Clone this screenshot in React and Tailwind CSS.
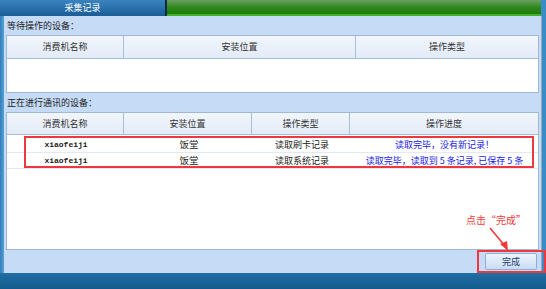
import React from "react";

const font = { fontFamily: '"Noto Sans CJK SC", "Noto Sans", sans-serif' };

function HeaderCell({ children, className = "" }) {
  return (
    <div
      className={`flex items-center justify-center border-r border-[#a9bfd9] text-[9px] text-[#333] ${className}`}
    >
      {children}
    </div>
  );
}

function Row({ cells }) {
  return (
    <div className="flex h-[16px] border-b border-[#e3e9f1]">
      <div className="w-[118px] flex items-center justify-center text-[8px] font-bold text-[#222]" style={{ fontFamily: '"Liberation Mono", monospace' }}>
        {cells[0]}
      </div>
      <div className="w-[128px] flex items-center justify-center text-[9.5px] text-[#222]">{cells[1]}</div>
      <div className="w-[98px] flex items-center justify-center text-[9px] text-[#222] whitespace-nowrap">{cells[2]}</div>
      <div className="flex-1 flex items-center justify-center text-[9px] text-[#1a1ae6] whitespace-nowrap">{cells[3]}</div>
    </div>
  );
}

export default function App() {
  return (
    <div className="relative w-[546px] h-[289px] flex flex-col overflow-hidden bg-[#c6dbf6]" style={font}>
      {/* top bar */}
      <div className="flex h-[16px]">
        <div className="w-[165px] flex items-center justify-center text-[9px] text-white bg-gradient-to-b from-[#3a84c0] to-[#1a5d97]">
          采集记录
        </div>
        <div className="w-[2px] bg-[#0e2c48]" />
        <div className="flex-1 flex flex-col">
          <div className="flex-1 bg-gradient-to-b from-[#6a9e60] via-[#2f8a1e] to-[#1e7a0c]" />
          <div className="h-[2px] bg-[#45b02a]" />
        </div>
        <div className="w-[5px] bg-[#3a8cc6]" />
      </div>

      {/* middle */}
      <div className="flex flex-1">
        <div className="w-[4px] bg-gradient-to-r from-[#2f7fbb] to-[#5aa0d4]" />
        <div className="flex-1 flex flex-col bg-[#c6dbf6] px-[2px]">
          <div className="h-[19px] flex items-center text-[9px] text-[#222] pl-[1px]">等待操作的设备：</div>
          <div className="h-[58px] flex flex-col border border-[#9fb8d6] bg-white">
            <div className="h-[23px] flex border-b border-[#a9bfd9] bg-gradient-to-b from-[#f2f6fc] to-[#e2ebf7]">
              <HeaderCell className="w-[117px]">消费机名称</HeaderCell>
              <HeaderCell className="w-[232px]">安装位置</HeaderCell>
              <HeaderCell className="flex-1 border-r-0">操作类型</HeaderCell>
            </div>
          </div>
          <div className="h-[19px] flex items-center text-[9px] text-[#222] pl-[1px]">正在进行通讯的设备：</div>
          <div className="h-[138px] flex flex-col border border-[#9fb8d6] bg-white">
            <div className="h-[22px] flex border-b border-[#a9bfd9] bg-gradient-to-b from-[#f2f6fc] to-[#e2ebf7]">
              <HeaderCell className="w-[117px]">消费机名称</HeaderCell>
              <HeaderCell className="w-[128px]">安装位置</HeaderCell>
              <HeaderCell className="w-[98px]">操作类型</HeaderCell>
              <HeaderCell className="flex-1 border-r-0">操作进度</HeaderCell>
            </div>
            <div className="h-[2px]" />
            <Row cells={["xiaofeiji", "饭堂", "读取刷卡记录", "读取完毕，没有新记录！"]} />
            <Row cells={["xiaofeiji", "饭堂", "读取系统记录", "读取完毕，读取到 5 条记录, 已保存 5 条"]} />
          </div>
          <div className="flex-1 flex items-center justify-end pr-[2px]">
            <button className="w-[52px] h-[17px] rounded-[2px] border border-[#8fb0d6] bg-gradient-to-b from-[#eef4fc] to-[#c9dcf4] text-[9px] text-[#1d3d6b] flex items-center justify-center">
              完成
            </button>
          </div>
        </div>
        <div className="w-[5px] bg-[#3a8cc6] border-l border-[#98a8ba]" />
      </div>

      {/* bottom bar */}
      <div className="h-[16px] bg-gradient-to-b from-[#1f6ea5] to-[#135b8d]" />

      {/* annotations */}
      <div className="absolute left-[24px] top-[136px] w-[510px] h-[32px] border-2 border-[#f0383c]" />
      <div className="absolute left-[477px] top-[250px] w-[69px] h-[23px] border-2 border-[#f0383c]" />
      <div className="absolute left-[466px] top-[215px] text-[10px] text-[#f0383c] leading-none">点击“完成”</div>
      <svg className="absolute left-0 top-0" width="546" height="289" viewBox="0 0 546 289">
        <line x1="490" y1="228" x2="505" y2="246" stroke="#f0383c" strokeWidth="1.6" />
        <polygon points="508,251 500,244 507,241" fill="#f0383c" />
      </svg>
    </div>
  );
}
